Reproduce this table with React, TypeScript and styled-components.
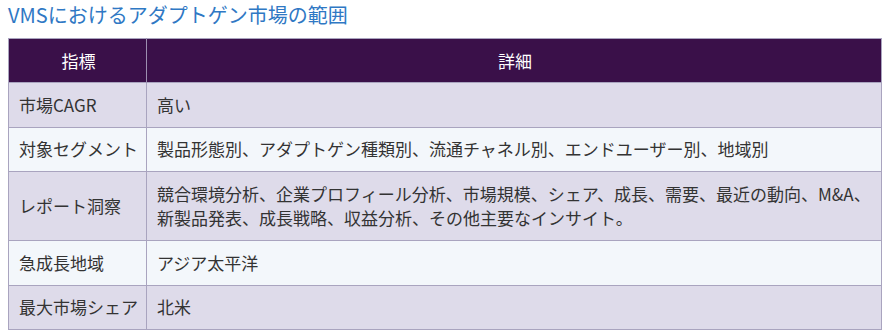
import styled, { createGlobalStyle } from "styled-components";

const GlobalStyle = createGlobalStyle`
  body {
    margin: 0;
    background: #ffffff;
    font-family: "Noto Sans CJK JP", "Noto Sans", sans-serif;
  }
`;

const Wrap = styled.div`
  padding: 0 7px 0 8px;
`;

const Title = styled.h2`
  margin: 0;
  height: 30px;
  font-size: 20px;
  font-weight: 400;
  line-height: 30px;
  color: #2f78c4;
`;

const Table = styled.table`
  margin-top: 8px;
  width: 100%;
  border-collapse: collapse;
  font-size: 17px;
  color: #333333;
  border: 1px solid #a9a4bf;
`;

const HeadCell = styled.th<{ $first?: boolean }>`
  height: 43px;
  padding: 0 8px 0 10px;
  background: #3a1049;
  color: #ffffff;
  font-weight: 400;
  text-align: center;
  border-left: 1px solid ${(p) => (p.$first ? "#a9a4bf" : "#9c8fb0")};
  width: ${(p) => (p.$first ? "116px" : "auto")};
`;

const Row = styled.tr<{ $alt: boolean }>`
  background: ${(p) => (p.$alt ? "#f3f7fb" : "#dedbea")};
`;

const Cell = styled.td<{ $tall?: boolean }>`
  padding: ${(p) => (p.$tall ? "10px 8px 10px 10px" : "0 8px 0 10px")};
  height: ${(p) => (p.$tall ? "auto" : "43.5px")};
  line-height: 24px;
  border: 1px solid #a9a4bf;
  white-space: nowrap;
`;

const rows: { label: string; lines: string[] }[] = [
  { label: "市場CAGR", lines: ["高い"] },
  {
    label: "対象セグメント",
    lines: ["製品形態別、アダプトゲン種類別、流通チャネル別、エンドユーザー別、地域別"],
  },
  {
    label: "レポート洞察",
    lines: [
      "競合環境分析、企業プロフィール分析、市場規模、シェア、成長、需要、最近の動向、M&A、",
      "新製品発表、成長戦略、収益分析、その他主要なインサイト。",
    ],
  },
  { label: "急成長地域", lines: ["アジア太平洋"] },
  { label: "最大市場シェア", lines: ["北米"] },
];

export default function App() {
  return (
    <Wrap>
      <GlobalStyle />
      <Title>VMSにおけるアダプトゲン市場の範囲</Title>
      <Table>
        <thead>
          <tr>
            <HeadCell $first>指標</HeadCell>
            <HeadCell>詳細</HeadCell>
          </tr>
        </thead>
        <tbody>
          {rows.map((r, i) => (
            <Row key={r.label} $alt={i % 2 === 1}>
              <Cell>{r.label}</Cell>
              <Cell $tall={r.lines.length > 1}>
                {r.lines.map((l, j) => (
                  <div key={j}>{l}</div>
                ))}
              </Cell>
            </Row>
          ))}
        </tbody>
      </Table>
    </Wrap>
  );
}
